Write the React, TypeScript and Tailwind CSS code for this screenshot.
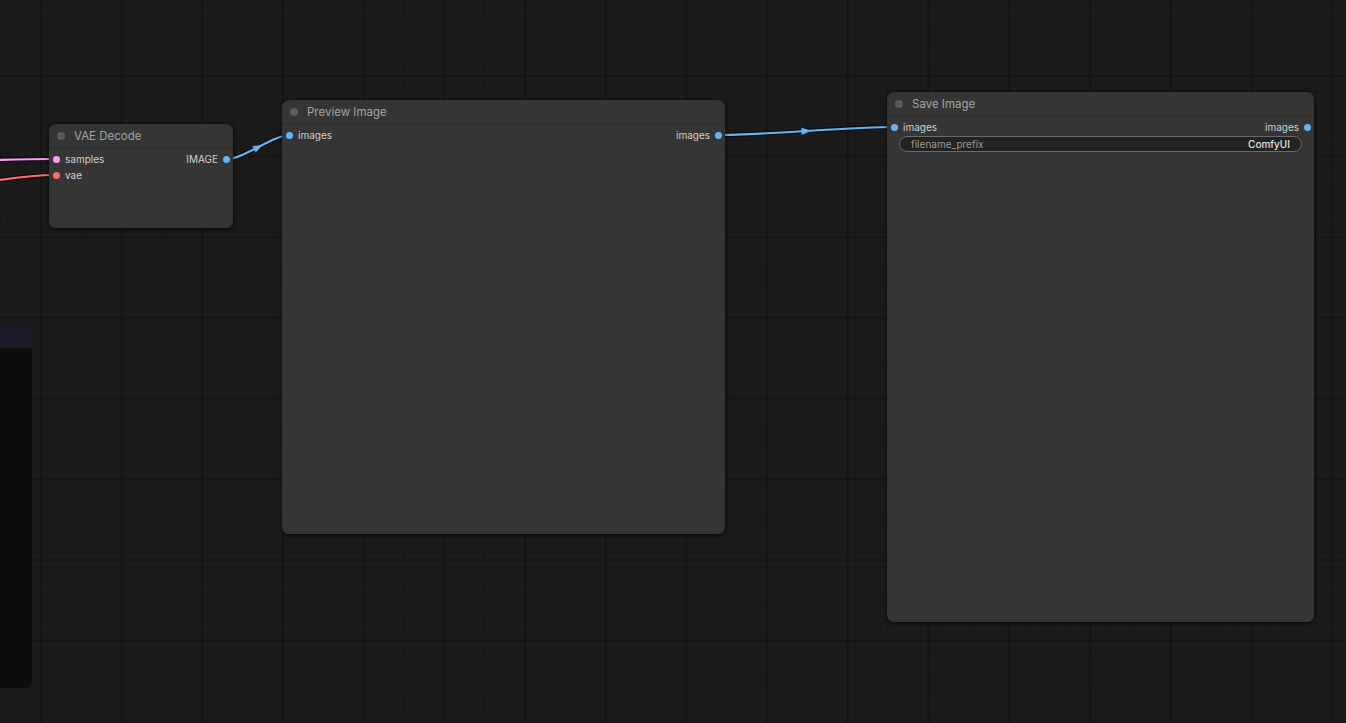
import React from "react";

// ComfyUI-style graph canvas: three nodes + their links on a dark grid.

type Slot = { label: string; color: string };

const FONT = { fontFamily: "Inter, 'Liberation Sans', Arial, sans-serif" };

function GridLayer() {
  return (
    <svg className="absolute inset-0 h-full w-full" width="1346" height="723">
      <defs>
        <pattern
          id="grid"
          width="80.7"
          height="80.7"
          patternUnits="userSpaceOnUse"
          patternTransform="translate(40 75)"
        >
          {Array.from({ length: 10 }).map((_, i) => (
            <g key={i}>
              <line x1={i * 8.07 + 0.5} y1="0" x2={i * 8.07 + 0.5} y2="80.7" stroke="#161616" strokeWidth="1" />
              <line x1="0" y1={i * 8.07 + 0.5} x2="80.7" y2={i * 8.07 + 0.5} stroke="#161616" strokeWidth="1" />
            </g>
          ))}
          <line x1="0.8" y1="0" x2="0.8" y2="80.7" stroke="#121212" strokeWidth="1.6" />
          <line x1="0" y1="0.8" x2="80.7" y2="0.8" stroke="#131313" strokeWidth="1.6" />
        </pattern>
      </defs>
      <rect width="1346" height="723" fill="url(#grid)" />
    </svg>
  );
}

function Link({ d, color, arrow }: { d: string; color: string; arrow?: { x: number; y: number; a: number } }) {
  return (
    <g>
      <path d={d} fill="none" stroke="rgba(0,0,0,0.55)" strokeWidth="4.5" strokeLinecap="round" />
      <path d={d} fill="none" stroke={color} strokeWidth="2.2" strokeLinecap="round" />
      {arrow && (
        <polygon
          points="-5,-3.6 5,0 -5,3.6"
          fill={color}
          transform={`translate(${arrow.x} ${arrow.y}) rotate(${arrow.a})`}
        />
      )}
    </g>
  );
}

function LinksLayer() {
  return (
    <svg className="absolute inset-0 h-full w-full" width="1346" height="723">
      <Link d="M -60 161 C -10 161, 10 159, 56 159" color="#ff9cf9" />
      <Link d="M -60 185 C -10 185, 10 175, 56 175" color="#ff6e6e" />
      <Link
        d="M 227 159 C 244 159, 273 135, 290 135"
        color="#64b5f6"
        arrow={{ x: 258.5, y: 147, a: -27.5 }}
      />
      <Link
        d="M 718 135 C 762 135, 851 127, 895 127"
        color="#64b5f6"
        arrow={{ x: 806.5, y: 131, a: -3.4 }}
      />
    </svg>
  );
}

function Dot({ color }: { color: string }) {
  return <span className="h-[7px] w-[7px] shrink-0 rounded-full" style={{ backgroundColor: color }} />;
}

function Node({
  title,
  className,
  inputs,
  outputs,
  children,
}: {
  title: string;
  className: string;
  inputs: Slot[];
  outputs: Slot[];
  children?: React.ReactNode;
}) {
  const rows = Math.max(inputs.length, outputs.length);
  return (
    <div
      className={`absolute flex flex-col rounded-[7px] bg-[#353535] shadow-[0_1px_4px_rgba(0,0,0,0.7)] ${className}`}
      style={FONT}
    >
      <div className="flex h-[24px] shrink-0 items-center gap-[9px] border-b border-[#2c2c2c] px-[8px]">
        <span className="h-[8px] w-[8px] rounded-full bg-[#5c5c5c]" />
        <span className="pt-[2px] text-[11.5px] leading-none text-[#a3a3a3]">{title}</span>
      </div>
      <div className="flex flex-col pt-[3px]">
        {Array.from({ length: rows }).map((_, i) => (
          <div key={i} className="flex h-[16px] items-center justify-between pl-[4px] pr-[3px] text-[10px] text-[#cfcfcf]">
            <div className="flex items-center gap-[5px]">
              {inputs[i] && (
                <>
                  <Dot color={inputs[i].color} />
                  <span>{inputs[i].label}</span>
                </>
              )}
            </div>
            <div className="flex items-center gap-[5px]">
              {outputs[i] && (
                <>
                  <span>{outputs[i].label}</span>
                  <Dot color={outputs[i].color} />
                </>
              )}
            </div>
          </div>
        ))}
        {children}
      </div>
    </div>
  );
}

export default function App() {
  const IMG = "#64b5f6";
  return (
    <div className="relative h-[723px] w-[1346px] overflow-hidden bg-[#1b1b1b]">
      <GridLayer />
      <LinksLayer />

      {/* partial node cut off at the left edge */}
      <div className="absolute left-0 top-[326px] flex h-[362px] w-[32px] flex-col overflow-hidden rounded-r-[7px] bg-[#0d0d0d]">
        <div className="h-[22px] bg-[#1c1a29]" />
      </div>

      <Node
        title="VAE Decode"
        className="left-[49px] top-[124px] h-[104px] w-[184px]"
        inputs={[
          { label: "samples", color: "#ff9cf9" },
          { label: "vae", color: "#ff6e6e" },
        ]}
        outputs={[{ label: "IMAGE", color: IMG }]}
      />

      <Node
        title="Preview Image"
        className="left-[282px] top-[100px] h-[434px] w-[443px]"
        inputs={[{ label: "images", color: IMG }]}
        outputs={[{ label: "images", color: IMG }]}
      />

      <Node
        title="Save Image"
        className="left-[887px] top-[92px] h-[530px] w-[427px]"
        inputs={[{ label: "images", color: IMG }]}
        outputs={[{ label: "images", color: IMG }]}
      >
        <div className="mx-[12px] mt-[1px] flex h-[16px] items-center justify-between rounded-full border border-[#6a6a6a] bg-[#222222] px-[11px] text-[10px]">
          <span className="text-[#9a9a9a]">filename_prefix</span>
          <span className="font-medium text-[#e0e0e0]">ComfyUI</span>
        </div>
      </Node>
    </div>
  );
}
